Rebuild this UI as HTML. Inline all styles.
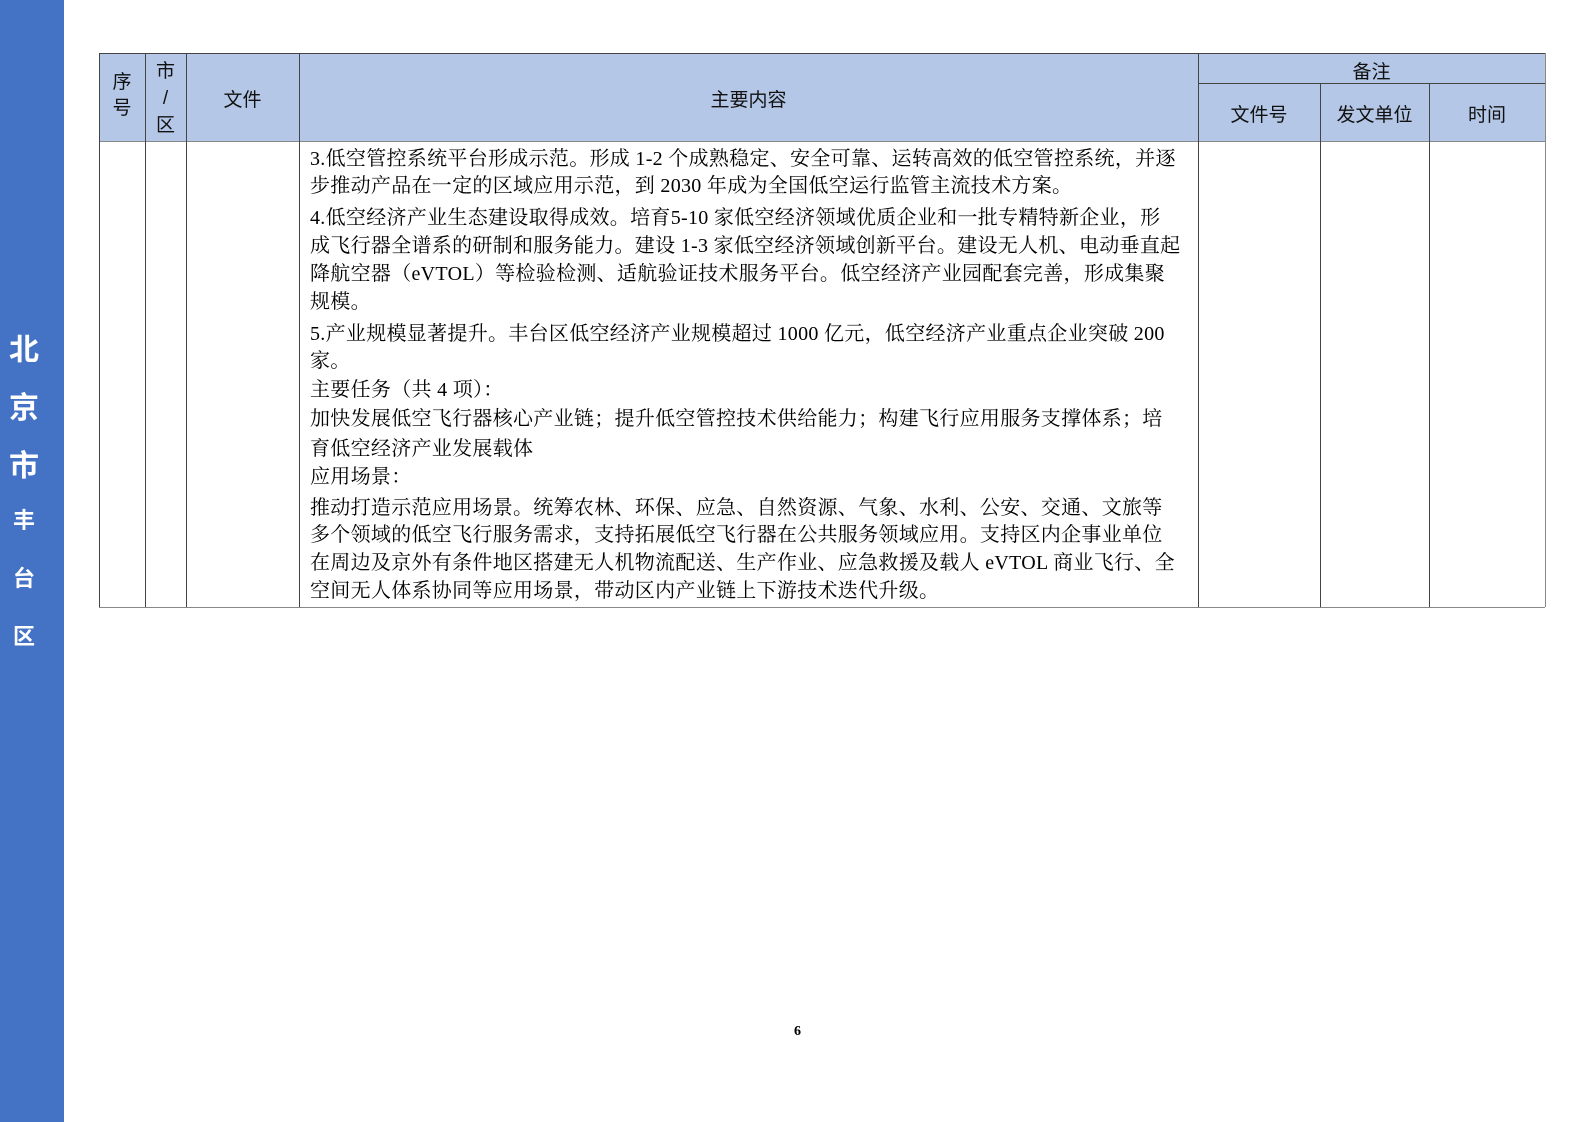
<!DOCTYPE html>
<html><head><meta charset="utf-8"><style>
body{margin:0;width:1587px;height:1122px;background:#fff;position:relative;overflow:hidden;font-family:"Liberation Serif","Noto Serif CJK SC",serif;}
.side{position:absolute;left:0;top:0;width:64px;height:1122px;background:#4472c4;}
.sc{position:absolute;left:0;width:48px;text-align:center;color:#fff;font-family:"Liberation Sans","Noto Sans CJK SC",sans-serif;font-weight:bold;}
.hd{position:absolute;top:53px;height:88px;background:#b4c7e7;}
.v{position:absolute;background:#444;width:1px;}
.h{position:absolute;background:#444;height:1px;}
.t{position:absolute;font-size:20px;letter-spacing:0.3px;color:#000;white-space:nowrap;line-height:24px;}
.c{position:absolute;font-size:19px;color:#111;text-align:center;font-family:"Liberation Sans","Noto Sans CJK SC",sans-serif;}
</style></head><body>
<div class="side"></div>
<div class="sc" style="top:325px;font-size:30px">北</div>
<div class="sc" style="top:383px;font-size:30px">京</div>
<div class="sc" style="top:441px;font-size:30px">市</div>
<div class="sc" style="top:503px;font-size:22px">丰</div>
<div class="sc" style="top:561px;font-size:22px">台</div>
<div class="sc" style="top:619px;font-size:22px">区</div>

<div class="hd" style="left:99px;width:1446px"></div>
<div class="h" style="left:99px;top:53px;width:1446px"></div>
<div class="h" style="left:99px;top:141px;width:1446px;background:#888"></div>
<div class="h" style="left:1198px;top:83px;width:347px"></div>
<div class="h" style="left:99px;top:607px;width:1446px;background:#888"></div>
<div class="v" style="left:99px;top:53px;height:554px"></div>
<div class="v" style="left:145px;top:53px;height:554px"></div>
<div class="v" style="left:186px;top:53px;height:554px"></div>
<div class="v" style="left:299px;top:53px;height:554px"></div>
<div class="v" style="left:1198px;top:53px;height:554px"></div>
<div class="v" style="left:1320px;top:83px;height:524px"></div>
<div class="v" style="left:1429px;top:83px;height:524px"></div>
<div class="v" style="left:1545px;top:53px;height:554px;background:#888"></div>

<div class="c" style="left:99px;width:46px;top:70px;line-height:26px">序<br>号</div>
<div class="c" style="left:145px;width:41px;top:58px;line-height:27px">市<br>/<br>区</div>
<div class="c" style="left:186px;width:113px;top:85px">文件</div>
<div class="c" style="left:299px;width:899px;top:85px">主要内容</div>
<div class="c" style="left:1198px;width:347px;top:57px">备注</div>
<div class="c" style="left:1198px;width:122px;top:100px">文件号</div>
<div class="c" style="left:1320px;width:109px;top:100px">发文单位</div>
<div class="c" style="left:1429px;width:116px;top:100px">时间</div>

<div class="t" style="left:310px;top:147px">3.低空管控系统平台形成示范。形成 1-2 个成熟稳定、安全可靠、运转高效的低空管控系统，并逐</div>
<div class="t" style="left:310px;top:174px">步推动产品在一定的区域应用示范，到 2030 年成为全国低空运行监管主流技术方案。</div>
<div class="t" style="left:310px;top:206px">4.低空经济产业生态建设取得成效。培育5-10 家低空经济领域优质企业和一批专精特新企业，形</div>
<div class="t" style="left:310px;top:234px">成飞行器全谱系的研制和服务能力。建设 1-3 家低空经济领域创新平台。建设无人机、电动垂直起</div>
<div class="t" style="left:310px;top:262px">降航空器（eVTOL）等检验检测、适航验证技术服务平台。低空经济产业园配套完善，形成集聚</div>
<div class="t" style="left:310px;top:290px">规模。</div>
<div class="t" style="left:310px;top:322px">5.产业规模显著提升。丰台区低空经济产业规模超过 1000 亿元，低空经济产业重点企业突破 200</div>
<div class="t" style="left:310px;top:349px">家。</div>
<div class="t" style="left:310px;top:378px">主要任务（共 4 项）：</div>
<div class="t" style="left:310px;top:407px">加快发展低空飞行器核心产业链；提升低空管控技术供给能力；构建飞行应用服务支撑体系；培</div>
<div class="t" style="left:310px;top:437px">育低空经济产业发展载体</div>
<div class="t" style="left:310px;top:465px">应用场景：</div>
<div class="t" style="left:310px;top:496px">推动打造示范应用场景。统筹农林、环保、应急、自然资源、气象、水利、公安、交通、文旅等</div>
<div class="t" style="left:310px;top:523px">多个领域的低空飞行服务需求，支持拓展低空飞行器在公共服务领域应用。支持区内企事业单位</div>
<div class="t" style="left:310px;top:551px">在周边及京外有条件地区搭建无人机物流配送、生产作业、应急救援及载人 eVTOL 商业飞行、全</div>
<div class="t" style="left:310px;top:579px">空间无人体系协同等应用场景，带动区内产业链上下游技术迭代升级。</div>

<div class="t" style="left:794px;top:1020px;font-size:14px;font-weight:bold">6</div>
</body></html>
